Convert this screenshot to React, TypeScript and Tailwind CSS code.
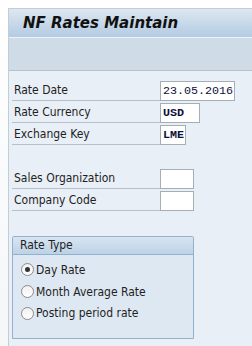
import React from "react";

const fieldFont = { fontFamily: '"DejaVu Sans Condensed", "Liberation Sans", sans-serif' };

const topFields = [
  { label: "Rate Date", value: "23.05.2016", w: "w-[75px]", bold: false },
  { label: "Rate Currency", value: "USD", w: "w-[40px]", bold: true },
  { label: "Exchange Key", value: "LME", w: "w-[26px]", bold: true },
];

const orgFields = ["Sales Organization", "Company Code"];

const rateTypes = ["Day Rate", "Month Average Rate", "Posting period rate"];

function FieldRow({ label, value, w, bold }: { label: string; value: string; w: string; bold?: boolean }) {
  return (
    <div className="flex items-end h-[22px]">
      <div className="w-[148px] h-[21px] border-b border-[#b7bfc8] pl-[2px] text-[12px] leading-[21px] text-[#1e1e1e]">
        {label}
      </div>
      <div
        className={`${w} h-[20px] bg-white border border-[#a5adb5] pl-[2px] text-[11.7px] leading-[18px] text-[#10103a] ${bold ? "font-bold" : ""}`}
        style={{ fontFamily: '"Liberation Mono", monospace' }}
      >
        {value}
      </div>
    </div>
  );
}

export default function App() {
  return (
    <div className="w-[252px] h-[346px] overflow-hidden bg-gradient-to-b from-[#ffffff] to-[#f4f6f8] pl-[8px] pt-[8px]" style={fieldFont}>
      <div className="h-full border-l border-t border-[#c4ccd4] bg-[#e8eff6] flex flex-col">
        <div className="h-[29px] bg-gradient-to-b from-[#dde7f1] to-[#b3cbe2] border-b border-[#eef3f8] flex items-center pl-[14px]">
          <span
            className="text-[15px] font-bold italic text-[#111111]"
            style={{ fontFamily: '"DejaVu Sans", sans-serif' }}
          >
            NF Rates Maintain
          </span>
        </div>
        <div className="h-[33px] bg-[#cfdce8] border-b border-[#b6c1cc]" />

        <div className="pl-[3px] pt-[8px] flex flex-col">
          {topFields.map((f) => (
            <FieldRow key={f.label} {...f} />
          ))}
          <div className="h-[22px]" />
          {orgFields.map((l) => (
            <FieldRow key={l} label={l} value="" w="w-[34px]" />
          ))}

          <div className="mt-[25px] w-[182px] h-[103px] border border-[#93b0cd] rounded-t-[2px] bg-[#dee8f2] flex flex-col">
            <div className="h-[18px] bg-gradient-to-b from-[#d8e5f1] to-[#bdd2e7] border-b border-[#93b0cd] pl-[7px] text-[12px] leading-[17px] text-[#1e1e1e]">
              Rate Type
            </div>
            <div className="flex flex-col pt-[4px] pl-[8px]">
              {rateTypes.map((r, i) => (
                <div key={r} className="flex items-center h-[21.7px] gap-[2px] text-[12px] text-[#1e1e1e]">
                  <span className="w-[13px] h-[13px] rounded-full border border-[#8c8c8c] bg-gradient-to-b from-[#f0f0f0] to-[#ffffff] flex items-center justify-center">
                    {i === 0 && <span className="w-[5px] h-[5px] rounded-full bg-[#333333]" />}
                  </span>
                  <span>{r}</span>
                </div>
              ))}
            </div>
          </div>
        </div>
      </div>
    </div>
  );
}
